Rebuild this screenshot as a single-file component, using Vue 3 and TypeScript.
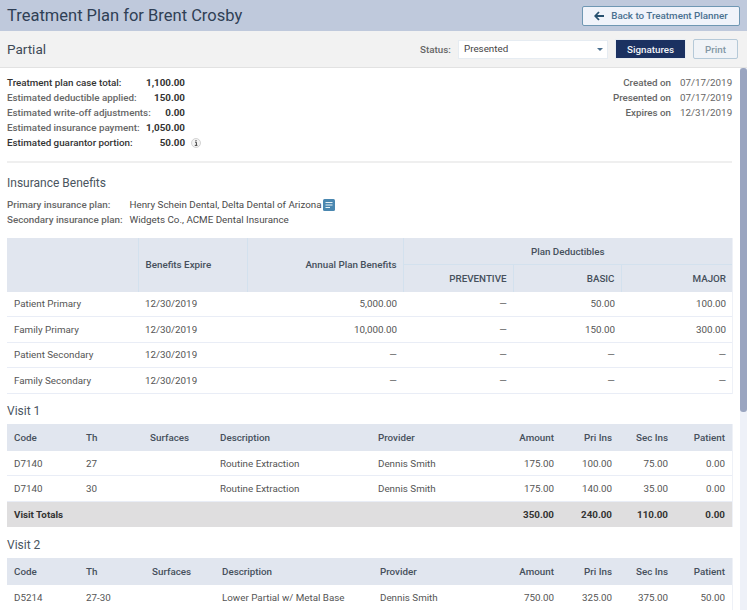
<script setup lang="ts">
interface Row { label: string; value: string; strong?: boolean; info?: boolean }
const summary: Row[] = [
  { label: 'Treatment plan case total:', value: '1,100.00', strong: true },
  { label: 'Estimated deductible applied:', value: '150.00' },
  { label: 'Estimated write-off adjustments:', value: '0.00' },
  { label: 'Estimated insurance payment:', value: '1,050.00' },
  { label: 'Estimated guarantor portion:', value: '50.00', strong: true, info: true },
]
const dates = [
  ['Created on', '07/17/2019'],
  ['Presented on', '07/17/2019'],
  ['Expires on', '12/31/2019'],
]
const benefits = [
  ['Patient Primary', '12/30/2019', '5,000.00', '—', '50.00', '100.00'],
  ['Family Primary', '12/30/2019', '10,000.00', '—', '150.00', '300.00'],
  ['Patient Secondary', '12/30/2019', '—', '—', '—', '—'],
  ['Family Secondary', '12/30/2019', '—', '—', '—', '—'],
]
const visits = [
  {
    title: 'Visit 1',
    cols: [72, 64, 70, 158, 130, 60, 58, 56, 57],
    rows: [
      ['D7140', '27', '', 'Routine Extraction', 'Dennis Smith', '175.00', '100.00', '75.00', '0.00'],
      ['D7140', '30', '', 'Routine Extraction', 'Dennis Smith', '175.00', '140.00', '35.00', '0.00'],
    ],
    totals: ['350.00', '240.00', '110.00', '0.00'],
  },
  {
    title: 'Visit 2',
    cols: [72, 66, 70, 158, 128, 60, 58, 56, 57],
    rows: [
      ['D5214', '27-30', '', 'Lower Partial w/ Metal Base', 'Dennis Smith', '750.00', '325.00', '375.00', '50.00'],
    ],
    totals: null,
  },
]
const visitHead = ['Code', 'Th', 'Surfaces', 'Description', 'Provider', 'Amount', 'Pri Ins', 'Sec Ins', 'Patient']
</script>

<template>
  <div class="page">
    <header class="top">
      <h1>Treatment Plan for Brent Crosby</h1>
      <button class="back" type="button">
        <svg width="11" height="10" viewBox="0 0 11 10"><path d="M5 1 1.2 5 5 9M1.5 5H10" fill="none" stroke="#27506f" stroke-width="1.8"/></svg>
        Back to Treatment Planner
      </button>
    </header>
    <div class="sub">
      <h2>Partial</h2>
      <div class="controls">
        <span class="status">Status:</span>
        <div class="select">Presented<i class="caret"></i></div>
        <button class="sign" type="button">Signatures</button>
        <button class="print" type="button">Print</button>
      </div>
    </div>
    <div class="body">
      <main class="content">
        <section class="overview">
          <div class="summary">
            <div v-for="r in summary" :key="r.label" class="sumrow" :class="{ strong: r.strong }">
              <span class="sumlabel">{{ r.label }}</span>
              <b class="sumval">{{ r.value }}</b>
              <svg v-if="r.info" class="info" width="10" height="10" viewBox="0 0 10 10">
                <circle cx="5" cy="5" r="4.5" fill="#f3f3f3" stroke="#c9c9c9" stroke-width=".8"/>
                <path d="M4 4.2h1.4v3M3.8 7.4h2.6M5 2v1.2" fill="none" stroke="#444" stroke-width="1"/>
              </svg>
            </div>
          </div>
          <div class="dates">
            <div v-for="d in dates" :key="d[0]" class="daterow">
              <span>{{ d[0] }}</span><em>{{ d[1] }}</em>
            </div>
          </div>
        </section>
        <hr class="rule" />
        <h3 class="ins-title">Insurance Benefits</h3>
        <div class="plans">
          <div class="plan">
            <span>Primary insurance plan:</span>
            <em>Henry Schein Dental, Delta Dental of Arizona</em>
            <svg width="12" height="12" viewBox="0 0 12 12"><rect width="12" height="12" rx="1.5" fill="#4a87b0"/><path d="M2.5 3.5h7M2.5 6h7M2.5 8.5h4.5" stroke="#e8f1f6" stroke-width="1"/></svg>
          </div>
          <div class="plan">
            <span>Secondary insurance plan:</span>
            <em>Widgets Co., ACME Dental Insurance</em>
          </div>
        </div>
        <table class="grid benefits">
          <colgroup>
            <col style="width:131px" /><col style="width:109px" /><col style="width:156px" />
            <col style="width:110px" /><col style="width:108px" /><col style="width:111px" />
          </colgroup>
          <thead>
            <tr class="h1">
              <th rowspan="2" class="sep"></th>
              <th rowspan="2" class="sep">Benefits Expire</th>
              <th rowspan="2" class="sep num">Annual Plan Benefits</th>
              <th colspan="3" class="center under">Plan Deductibles</th>
            </tr>
            <tr class="h2">
              <th class="sep num">PREVENTIVE</th>
              <th class="sep num">BASIC</th>
              <th class="num">MAJOR</th>
            </tr>
          </thead>
          <tbody>
            <tr v-for="b in benefits" :key="b[0]">
              <td>{{ b[0] }}</td>
              <td>{{ b[1] }}</td>
              <td v-for="(v, i) in b.slice(2)" :key="i" class="num">{{ v }}</td>
            </tr>
          </tbody>
        </table>
        <section v-for="v in visits" :key="v.title" class="visit">
          <h3 class="visit-title">{{ v.title }}</h3>
          <table class="grid">
            <colgroup>
              <col v-for="(w, i) in v.cols" :key="i" :style="{ width: w + 'px' }" />
            </colgroup>
            <thead>
              <tr class="vh">
                <th v-for="(h, i) in visitHead" :key="h" :class="{ num: i > 4 }">{{ h }}</th>
              </tr>
            </thead>
            <tbody>
              <tr v-for="(r, ri) in v.rows" :key="ri">
                <td v-for="(c, i) in r" :key="i" :class="{ num: i > 4 }">{{ c }}</td>
              </tr>
              <tr v-if="v.totals" class="totals">
                <td colspan="5">Visit Totals</td>
                <td v-for="(t, i) in v.totals" :key="i" class="num">{{ t }}</td>
              </tr>
            </tbody>
          </table>
        </section>
      </main>
      <div class="track"><div class="thumb"></div></div>
    </div>
  </div>
</template>

<style>
html, body { margin: 0; overflow: hidden; background: #fff; }
</style>

<style scoped>
.page {
  width: 747px; height: 610px; overflow: hidden;
  font-family: Roboto, "Liberation Sans", sans-serif; font-size: 9.8px; color: #4a4a4a;
  display: flex; flex-direction: column;
}
.top {
  flex: none; height: 31px; box-sizing: border-box; background: #bfc9dc;
  display: flex; align-items: center; justify-content: space-between; padding: 0 7px;
}
h1 { margin: 0; font-size: 16.5px; font-weight: 400; color: #2f3f55; }
.back {
  width: 158px; height: 20px; box-sizing: border-box; padding: 0;
  background: #f0f3fa; border: 1px solid #6f97b3; border-radius: 2px;
  color: #4a7090; font: 500 9.8px Roboto, sans-serif;
  display: flex; align-items: center; justify-content: center; gap: 6px;
}
.sub {
  flex: none; height: 37px; box-sizing: border-box; background: #f2f2f2; border-bottom: 1px solid #e2e2e2;
  display: flex; align-items: center; justify-content: space-between; padding: 0 9px 0 7px;
}
h2 { margin: 0; font-size: 13.5px; font-weight: 400; color: #3f4a57; }
.controls { display: flex; align-items: center; }
.status { font-weight: 500; color: #666; width: 38px; }
.select {
  width: 150px; height: 19px; box-sizing: border-box; background: #fff; border: 1px solid #e6ecf2;
  padding-left: 5px; line-height: 16px; color: #444; position: relative;
}
.caret {
  position: absolute; right: 4px; top: 7px; width: 0; height: 0;
  border-left: 3px solid transparent; border-right: 3px solid transparent; border-top: 3.5px solid #4a7090;
}
.sign {
  margin-left: 7px; width: 71px; height: 20px; padding: 0; background: #1b3161; border: 1px solid #e8edf3;
  color: #f2f4f8; font: 500 9.8px Roboto, sans-serif;
}
.print {
  margin-left: 7px; width: 45px; height: 20px; padding: 0; background: #f0f3f7; border: 1px solid #b5c9d8; border-radius: 2px;
  color: #8397a5; font: 500 9.8px Roboto, sans-serif;
}
.body { flex: 1; min-height: 0; display: flex; overflow: hidden; }
.content { flex: 1; min-width: 0; padding: 7px 8px 0 7px; }
.track { flex: none; width: 7px; background: #eef1f8; }
.thumb { height: 344px; background: #9aa5c0; border-radius: 3px; }
.overview { display: flex; justify-content: space-between; }
.sumrow { height: 15px; line-height: 15px; display: flex; align-items: center; color: #666; font-weight: 500; }
.sumrow.strong { color: #333; }
.sumlabel { width: 139px; white-space: nowrap; }
.sumval { width: 39px; text-align: right; font-weight: 700; color: #333; }
.info { margin-left: 6px; }
.daterow { height: 15px; line-height: 15px; display: flex; justify-content: flex-end; color: #666; font-weight: 500; }
.daterow em { font-style: normal; font-weight: 400; width: 52px; margin-left: 9px; white-space: nowrap; }
.rule { border: 0; border-top: 2px solid #efefef; margin: 11px 0 0; }
.ins-title { margin: 13px 0 0; font-size: 12px; line-height: 15px; font-weight: 400; color: #4a5560; }
.plans { margin-top: 6px; }
.plan { height: 15px; line-height: 15px; display: flex; align-items: center; }
.plan span { width: 122.5px; font-weight: 500; color: #666; white-space: nowrap; }
.plan em { font-style: normal; color: #4a4a4a; margin-right: 1px; white-space: nowrap; }
.grid {
  width: 725px; table-layout: fixed; border-collapse: collapse;
  box-shadow: 1px 0 #eef1f7;
}
.benefits { margin-top: 11px; }
.benefits .num { padding-right: 6px; }
th {
  background: #e1e6ef; font-weight: 500; color: #46505c; text-align: left; padding: 0 7px; white-space: nowrap;
}
td { padding: 0 7px; height: 25.4px; box-sizing: border-box; border-bottom: 1px solid #e9edf6; color: #555; white-space: nowrap; overflow: hidden; }
.num { text-align: right; }
.center { text-align: center; }
.sep { border-right: 1px solid #d3e1ee; }
.under { border-bottom: 1px solid #d3e1ee; }
.h1 th { height: 26px; }
.h2 th { height: 26.5px; }
.vh th { height: 27px; }
.totals td { background: #dfdedf; font-weight: 700; color: #333; border-bottom: 0; }
.visit-title { margin: 10px 0 6px; font-size: 12px; line-height: 14px; font-weight: 400; color: #4a5560; }
.visit + .visit .visit-title { margin-top: 11px; }
</style>
